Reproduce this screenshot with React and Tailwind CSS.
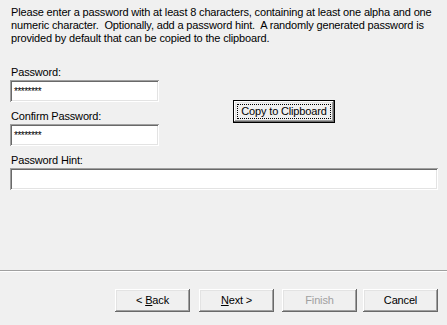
export default function App() {
  const font = { fontFamily: '"Liberation Sans", Arial, sans-serif' };
  const inputCls =
    "h-[22px] bg-white shadow-[inset_1px_1px_0_#a0a0a0,inset_-1px_-1px_0_#ffffff,inset_2px_2px_0_#696969,inset_-2px_-2px_0_#e3e3e3] px-[4px] flex items-center text-[11px] leading-[13px]";
  const btnCls =
    "relative w-[75px] h-[23px] bg-[#f0f0f0] flex items-center justify-center text-[11px] leading-[13px] whitespace-pre shadow-[inset_-1px_-1px_0_#696969,inset_1px_1px_0_#ffffff,inset_-2px_-2px_0_#a0a0a0,inset_2px_2px_0_#e3e3e3]";
  return (
    <div
      className="w-[447px] h-[325px] bg-[#f0f0f0] text-black flex flex-col overflow-hidden text-[11px] leading-[13px] tracking-[-0.16px]"
      style={font}
    >
      <div className="flex-1 flex flex-col pt-[6px] px-[10px]">
        <p className="pl-[1px] leading-[13px] whitespace-nowrap">
          Please enter a password with at least 8 characters, containing at least one alpha and one
          <br />
          numeric character.&nbsp; Optionally, add a password hint.&nbsp; A randomly generated password is
          <br />
          provided by default that can be copied to the clipboard.
        </p>
        <div className="mt-[21px] flex items-start">
          <div className="w-[149px] flex flex-col">
            <label className="pl-[1px] mb-[1px]">Password:</label>
            <div className={inputCls}>
              <span className="text-[10px] tracking-[-0.5px]">********</span>
            </div>
            <label className="pl-[1px] mb-[1px] mt-[8px]">Confirm Password:</label>
            <div className={inputCls}>
              <span className="text-[10px] tracking-[-0.5px]">********</span>
            </div>
          </div>
          <div className="ml-[74px] mt-[34px] relative w-[102px] h-[23px] bg-[#f0f0f0] flex items-center justify-center whitespace-nowrap shadow-[inset_0_0_0_1px_#000000,inset_-2px_-2px_0_#696969,inset_2px_2px_0_#ffffff,inset_-3px_-3px_0_#a0a0a0,inset_3px_3px_0_#e3e3e3]">
            Copy to Clipboard
            <div className="absolute inset-[4px] border border-dotted border-black"></div>
          </div>
        </div>
        <label className="pl-[1px] mb-[1px] mt-[8px]">Password Hint:</label>
        <div className={inputCls + " w-[428px]"}></div>
      </div>
      <div className="h-[2px] border-t border-[#a0a0a0] border-b border-b-white"></div>
      <div className="flex justify-end pr-[9px] pt-[17px] pb-[13px]">
        <div className={btnCls}>
          {"< "}
          <u className="underline-offset-[1px]">B</u>
          {"ack"}
        </div>
        <div className={btnCls + " ml-[9px]"}>
          <u className="underline-offset-[1px]">N</u>
          {"ext >"}
        </div>
        <div className={btnCls + " ml-[8px] text-[#a0a0a0]"}>Finish</div>
        <div className={btnCls + " ml-[6px]"}>Cancel</div>
      </div>
    </div>
  );
}
